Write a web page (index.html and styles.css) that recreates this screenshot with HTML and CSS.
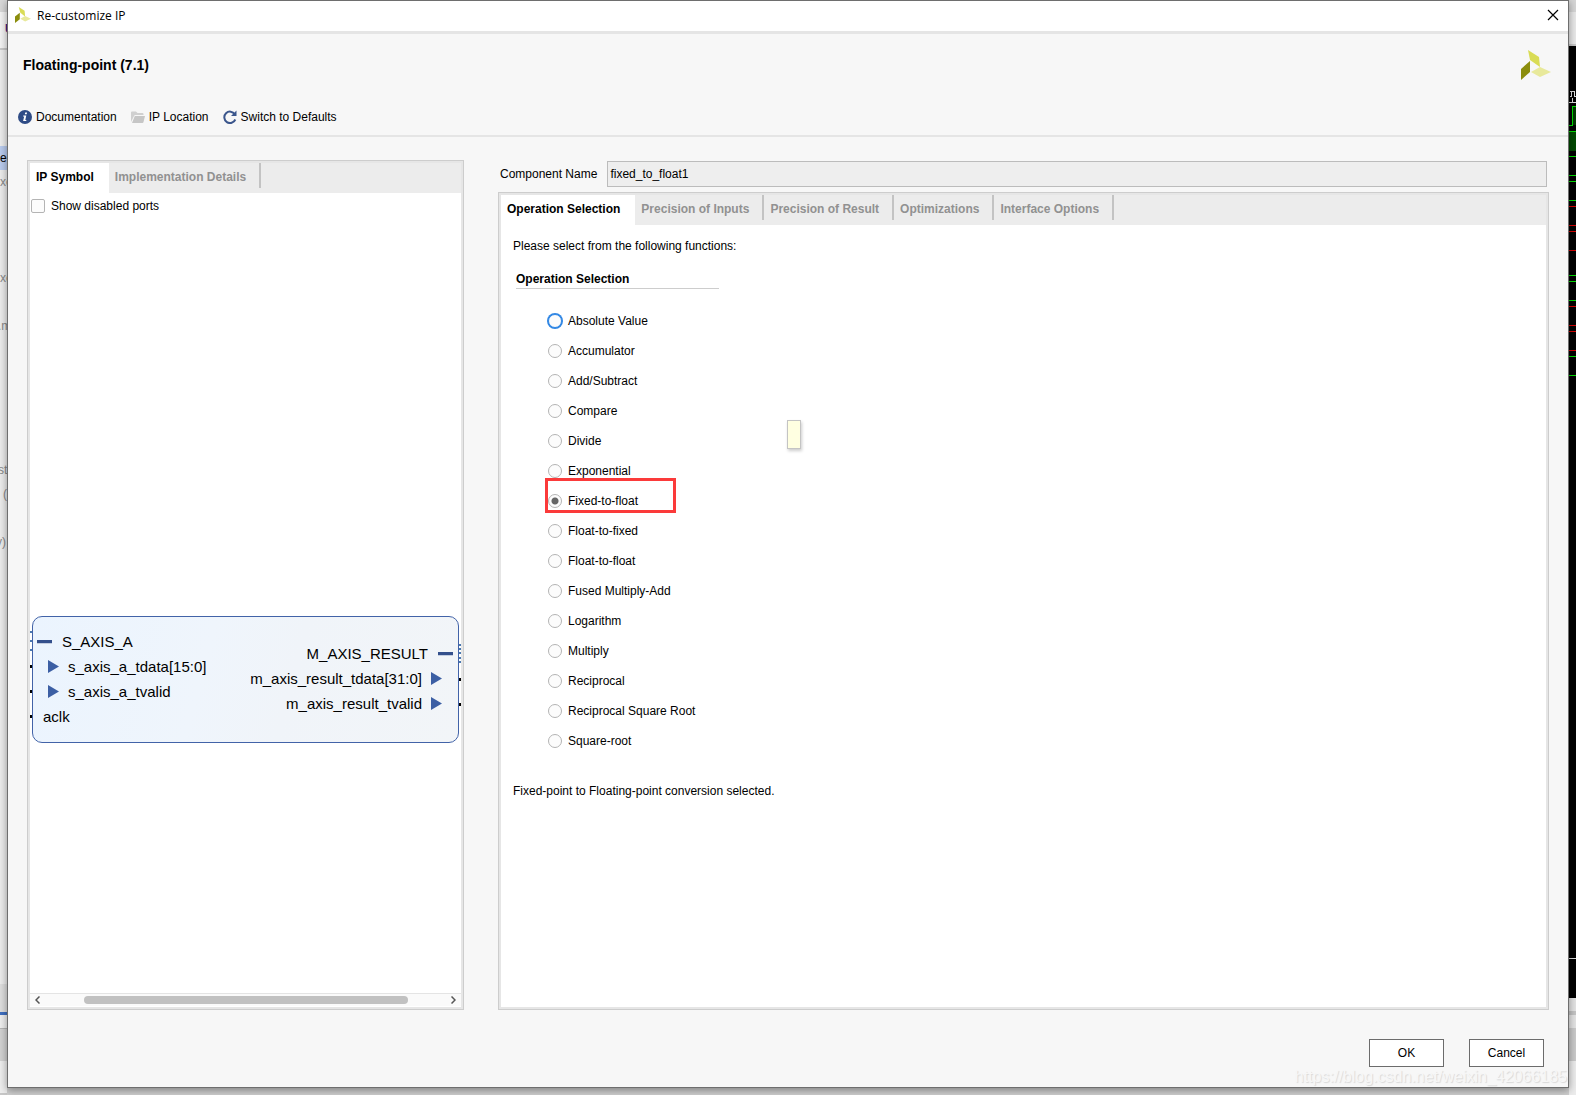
FILE: index.html
```html
<!DOCTYPE html>
<html lang="en">
<head>
<meta charset="utf-8">
<title>Re-customize IP</title>
<link rel="stylesheet" href="styles.css">
</head>
<body>
<div class="desktop">
  <div class="behind behind-left" aria-hidden="true">
    <span class="frag-purple">U</span>
    <span class="frag-selected">ec</span>
    <span class="frag f1">xe</span>
    <span class="frag f2">xe</span>
    <span class="frag f3">.m</span>
    <span class="frag f4">st</span>
    <span class="frag f5">(</span>
    <span class="frag f6">v)</span>
  </div>
  <svg class="behind behind-right" width="7" height="1095" viewBox="0 0 7 1095" aria-hidden="true" shape-rendering="crispEdges">
    <rect width="7" height="12" fill="#d6d6d6"/>
    <rect y="12" width="7" height="32" fill="#e9e9e9"/>
    <rect y="44" width="7" height="2" fill="#c8c8c8"/>
    <rect y="46" width="7" height="952" fill="#000"/>
    <path d="M1 91.500H6M2.500 91V97M5.500 91V97M1 96.500H3M5 96.500H7M0 102.500H7M3.500 98V102" stroke="#ddd" fill="none"/>
    <path d="M0 125.500H3.500V106.500H7M0 131.500H7" stroke="#00e000" fill="none"/>
    <rect x="4" y="107" width="3" height="18" fill="#003a00"/>
    <rect y="132" width="7" height="19" fill="#004800"/>
    <path d="M0 156.500H7M0 175.500H7M0 181.500H7M0 200.500H7M0 275.500H7M0 281.500H7M0 300.500H7M0 356.500H7M0 375.500H7" stroke="#00e000"/>
    <path d="M0 206.500H7M0 225.500H7M0 231.500H7M0 250.500H7M0 306.500H7M0 325.500H7M0 331.500H7M0 350.500H7" stroke="#d80000"/>
    <path d="M0 958.500H7" stroke="#ddd"/>
    <rect y="998" width="7" height="13" fill="#e4e4e4"/>
    <rect y="1011" width="7" height="4" fill="#c4c4c4"/>
    <rect y="1015" width="7" height="13" fill="#e4e4e4"/>
    <rect y="1028" width="7" height="33" fill="#cacaca"/>
    <rect y="1061" width="7" height="34" fill="#ececec"/>
  </svg>

  <main class="dialog">
    <header class="titlebar">
      <svg class="app-icon" width="16" height="16" viewBox="0 0 30 30" aria-hidden="true">
        <path d="M7 0l11 7 1 11-9-7z" fill="#d9dc55"/><path d="M0 18l9-7v12l-9 7z" fill="#8b8d0c"/><path d="M19 17l11 5-11 5-9-5z" fill="#e8e99b"/>
      </svg>
      <span class="title">Re-customize IP</span>
      <button class="close" type="button" aria-label="Close">
        <svg width="12" height="12" viewBox="0 0 12 12"><path d="M1 1l10 10M11 1L1 11" stroke="#000" stroke-width="1.200"/></svg>
      </button>
    </header>

    <section class="banner">
      <div class="banner-top">
        <h1>Floating-point (7.1)</h1>
        <svg width="30" height="30" viewBox="0 0 30 30" aria-hidden="true">
          <path d="M7 0l11 7 1 10-10-7z" fill="#d9dc55"/><path d="M0 19l9-8v11l-9 8z" fill="#8b8d0c"/><path d="M19 17l11 5-11 5-9-5z" fill="#e8e99b"/>
        </svg>
      </div>
      <nav class="toolbar">
        <a href="#documentation">
          <svg width="14" height="14" viewBox="0 0 14 14" aria-hidden="true"><circle cx="7" cy="7" r="7" fill="#2f4c86"/><path d="M7.200 2.500h1.900l-.4 1.700H6.800zM5.300 5.400h3L7.300 9.900h1.100l-.2 1.100H5.100L6.200 6.500H5z" fill="#fff"/></svg>
          Documentation</a>
        <a href="#location">
          <svg width="14" height="14" viewBox="0 0 14 14" aria-hidden="true"><path d="M0 12V2.500Q0 1.500 1 1.500H5L6.500 3H11.500Q12.500 3 12.500 4V5H4.500Q3.500 5 3 6z" fill="#d0d0d0"/><path d="M3.800 6H14L12.500 12Q12.300 13 11.500 13H1z" fill="#c6c6c6"/></svg>
          IP Location</a>
        <a href="#defaults">
          <svg width="14" height="14" viewBox="0 0 14 14" aria-hidden="true"><path d="M11.800 4.200A5.700 5.700 0 1 0 12.300 9.500" fill="none" stroke="#3b568c" stroke-width="2"/><path d="M13.500 0.500V6H8z" fill="#3b568c"/></svg>
          Switch to Defaults</a>
      </nav>
    </section>

    <div class="content">
      <section class="panel symbol-panel">
        <div class="tabs" role="tablist">
          <button type="button" role="tab" aria-selected="true" class="tab active">IP Symbol</button>
          <button type="button" role="tab" aria-selected="false" class="tab">Implementation Details</button>
        </div>
        <label class="check"><input type="checkbox">Show disabled ports</label>
        <div class="symbol-view">
          <div class="symbol">
            <svg class="pins" width="2" height="127" viewBox="0 0 2 127" aria-hidden="true" shape-rendering="crispEdges"><path d="M0 16h2M0 25h2M0 34h2" stroke="#4a78b0" stroke-width="2"/><path d="M0 50.500h2M0 75h2M0 100.500h2" stroke="#000" stroke-width="3"/></svg>
            <div class="block">
              <ul class="ports">
                <li class="bus"><i class="minus"></i>S_AXIS_A</li>
                <li class="pin"><i class="arrow"></i>s_axis_a_tdata[15:0]</li>
                <li class="pin"><i class="arrow"></i>s_axis_a_tvalid</li>
                <li>aclk</li>
              </ul>
              <ul class="ports out">
                <li class="bus">M_AXIS_RESULT<i class="minus"></i></li>
                <li class="pin">m_axis_result_tdata[31:0]<i class="arrow"></i></li>
                <li class="pin">m_axis_result_tvalid<i class="arrow"></i></li>
              </ul>
            </div>
            <svg class="pins" width="2" height="127" viewBox="0 0 2 127" aria-hidden="true" shape-rendering="crispEdges"><path d="M0 29h2M0 33h2M0 37h2M0 42h2M0 46h2" stroke="#4a78b0" stroke-width="2"/><path d="M0 63.500h2M0 88h2" stroke="#000" stroke-width="3"/></svg>
          </div>
        </div>
        <div class="scrollbar">
          <svg width="5" height="8" viewBox="0 0 5 8"><path d="M4.500 0.500L1 4l3.500 3.500" fill="none" stroke="#555" stroke-width="1.500"/></svg>
          <div class="track"><div class="thumb"></div></div>
          <svg width="5" height="8" viewBox="0 0 5 8"><path d="M.5 .5L4 4 .5 7.500" fill="none" stroke="#555" stroke-width="1.500"/></svg>
        </div>
      </section>

      <section class="config">
        <div class="name-row">
          <label for="cname">Component Name</label>
          <input id="cname" type="text" value="fixed_to_float1" readonly>
        </div>
        <div class="panel config-panel">
          <div class="tabs" role="tablist">
            <button type="button" role="tab" aria-selected="true" class="tab active">Operation Selection</button>
            <button type="button" role="tab" aria-selected="false" class="tab">Precision of Inputs</button>
            <button type="button" role="tab" aria-selected="false" class="tab">Precision of Result</button>
            <button type="button" role="tab" aria-selected="false" class="tab">Optimizations</button>
            <button type="button" role="tab" aria-selected="false" class="tab">Interface Options</button>
          </div>
          <div class="tab-body">
            <p>Please select from the following functions:</p>
            <fieldset>
              <legend>Operation Selection</legend>
              <label class="focus"><input type="radio" name="op">Absolute Value</label>
              <label><input type="radio" name="op">Accumulator</label>
              <label><input type="radio" name="op">Add/Subtract</label>
              <label><input type="radio" name="op">Compare</label>
              <label><input type="radio" name="op">Divide</label>
              <label><input type="radio" name="op">Exponential</label>
              <label class="marked"><input type="radio" name="op" checked>Fixed-to-float</label>
              <label><input type="radio" name="op">Float-to-fixed</label>
              <label><input type="radio" name="op">Float-to-float</label>
              <label><input type="radio" name="op">Fused Multiply-Add</label>
              <label><input type="radio" name="op">Logarithm</label>
              <label><input type="radio" name="op">Multiply</label>
              <label><input type="radio" name="op">Reciprocal</label>
              <label><input type="radio" name="op">Reciprocal Square Root</label>
              <label><input type="radio" name="op">Square-root</label>
            </fieldset>
            <p>Fixed-point to Floating-point conversion selected.</p>
            <div class="tooltip" role="tooltip"></div>
          </div>
        </div>
      </section>
    </div>

    <footer class="actions">
      <button type="button">OK</button>
      <button type="button">Cancel</button>
    </footer>
    <span class="watermark">https://blog.csdn.net/weixin_42066185</span>
  </main>
</div>
</body>
</html>
```
FILE: styles.css
```css
*, *::after { box-sizing: border-box; }
body {
  margin: 0;
  font: 12px/16px "Liberation Sans", Arial, sans-serif;
  color: #000;
}
button, input { font: inherit; color: inherit; }
.desktop {
  position: relative;
  display: flex;
  min-height: 100vh;
  padding: 0 7px 7px;
  background: #cfcfcf;
  overflow: hidden;
}

/* windows showing behind the dialog */
.behind { position: absolute; top: 0; }
.behind-right { right: 0; }
.behind-left {
  left: 0;
  bottom: 0;
  width: 7px;
  overflow: hidden;
  background: linear-gradient(#d8d8d8 0 12px, #f3f3f3 12px 48px, #c8c8c8 48px 50px, #ececec 50px 984px, #dedede 984px 1012px, #3f6fc0 1012px 1015px, #eeeeee 1015px 1028px, #b5b5b5 1028px 1029px, #d2d2d2 1029px 1061px, #eeeeee 1061px 1093px, #c8c8c8 1093px);
}
.behind-left span { position: absolute; left: 0; white-space: nowrap; }
.frag { color: #888; }
.behind-left .frag-purple { left: 5px; top: 21px; color: #40208a; font-weight: bold; }
.behind-left .frag-selected { top: 146px; width: 7px; height: 24px; line-height: 24px; background: #b9cbee; }
.f1 { top: 174px; }
.f2 { top: 270px; }
.behind-left .f3 { top: 318px; left: -2px; }
.behind-left .f4 { top: 462px; left: -2px; }
.behind-left .f5 { top: 486px; left: 3px; }
.behind-left .f6 { top: 534px; left: -4px; }

.dialog {
  position: relative;
  flex: 1;
  display: flex;
  flex-direction: column;
  min-width: 0;
  background: #f7f7f7;
  border: 1px solid #6e6e6e;
  box-shadow: 0 2px 8px rgba(0, 0, 0, .4);
}
.titlebar {
  display: flex;
  align-items: center;
  height: 33px;
  padding: 0 9px 2px 7px;
  background: #fff;
  border-bottom: 3px solid #e5e5e5;
}
.title { flex: 1; padding: 2px 0 0 6px; font: 12px/16px "Open Sans", "Noto Sans", sans-serif; }
.close { display: flex; padding: 0; border: 0; background: none; }

.banner { height: 103px; border-bottom: 2px solid #e5e5e5; }
.banner-top { display: flex; justify-content: space-between; padding: 16px 17px 0 15px; }
h1 { margin: 0; font-size: 14px; line-height: 30px; }
.toolbar { display: flex; gap: 14px; padding: 29px 10px 0; }
.toolbar a { display: flex; align-items: center; gap: 4px; color: inherit; text-decoration: none; }

.content {
  flex: 1;
  display: flex;
  gap: 34px;
  padding: 23px 19px 0;
}
.panel {
  display: flex;
  flex-direction: column;
  background: #fff;
  border: 1px solid #cdcdcd;
  box-shadow: inset 0 0 0 2px #e6e6e6;
  padding: 2px;
}
.symbol-panel { width: 437px; padding-bottom: 3px; }
.tabs { display: flex; height: 30px; background: #ececec; }
.tab {
  height: 25px;
  padding: 4px 13px 0 6px;
  border: 0;
  border-right: 2px solid #c3c3c3;
  background: none;
  color: #919191;
  font-weight: bold;
  line-height: 21px;
}
.tab.active { height: 30px; padding: 4px 15px 5px 6px; border: 0; background: #fff; color: #000; }

.check { display: flex; align-items: center; gap: 6px; padding: 5px 1px; }
.check input {
  appearance: none;
  width: 14px;
  height: 14px;
  margin: 0;
  border: 1px solid #b4b4b4;
  border-radius: 2px;
  background: #fcfcfc;
}
.symbol-view { flex: 1; display: flex; flex-direction: column; padding-top: 397px; }
.symbol { display: flex; }
.block {
  flex: 1;
  display: flex;
  justify-content: space-between;
  height: 127px;
  padding: 12px 16px 0 4px;
  border: 1px solid #4263a8;
  border-radius: 10px;
  background: linear-gradient(105deg, #ebf4fe 0, #eff5fc 40%, #f0f4f9 60%, #f2f5f8 100%);
}
.ports { margin: 0; padding: 0; list-style: none; font-size: 15px; line-height: 25px; }
.ports li { display: flex; align-items: center; padding-left: 6px; }
.ports .bus { gap: 10px; padding-left: 0; }
.ports .pin { gap: 9px; padding-left: 11px; }
.ports.out { padding-top: 12px; }
.ports.out li { justify-content: flex-end; padding-left: 0; }
.ports.out .bus { margin-right: -11px; }
.minus { width: 15px; height: 3px; background: #34508c; box-shadow: 0 1px #c3cde0; }
.arrow { width: 11px; height: 13px; background: #3c5fa4; clip-path: polygon(0 0, 100% 50%, 0 100%); }

.scrollbar { display: flex; align-items: center; height: 13px; padding: 0 5px; background: #fafafa; border-top: 1px solid #e4e4e4; }
.track { flex: 1; padding: 0 43px 0 44px; }
.thumb { height: 8px; border-radius: 4px; background: #c1c1c1; }

.config { flex: 1; display: flex; flex-direction: column; min-width: 0; }
.name-row { display: flex; align-items: center; gap: 10px; padding: 1px 2px 5px; }
.name-row input {
  flex: 1;
  min-width: 0;
  height: 26px;
  padding: 0 2px;
  border: 1px solid #bcbcbc;
  border-radius: 0;
  background: #eeeeee;
}
.config-panel { flex: 1; }
.tab-body { position: relative; padding: 13px 12px; }
p { margin: 0; }
fieldset { margin: 17px 0 0; padding: 0 3px; border: 0; min-width: 0; }
legend { width: 203px; margin: 0 0 17px; padding: 0 0 1px; border-bottom: 1px solid #cdcdcd; font-weight: bold; }
fieldset label { position: relative; display: flex; align-items: center; gap: 6px; width: 220px; height: 30px; padding-left: 32px; }
fieldset + p { padding-top: 27px; }
fieldset input {
  appearance: none;
  width: 14px;
  height: 14px;
  margin: 0;
  border: 1px solid #b4b4b4;
  border-radius: 50%;
  background: #fcfcfc;
}
fieldset input:checked { background: radial-gradient(circle, #666 0 3px, #fcfcfc 4px); }
.focus input { border-color: #2f86e4; box-shadow: 0 0 0 1px #2f86e4; }
.marked::after {
  content: "";
  position: absolute;
  left: 29px;
  top: -8px;
  width: 131px;
  height: 35px;
  border: 3px solid #fb3a3a;
}
.tooltip {
  position: absolute;
  left: 286px;
  top: 195px;
  width: 14px;
  height: 29px;
  border: 1px solid #c4c4c4;
  background: #ffffe1;
  box-shadow: 1px 2px 3px rgba(0, 0, 0, .2);
}
.actions { display: flex; justify-content: flex-end; gap: 25px; padding: 29px 24px 20px; }
.actions button { width: 75px; height: 28px; padding: 0; border: 1px solid #6c6c6c; background: #fff; }
.watermark {
  position: absolute;
  right: 1px;
  bottom: 1px;
  font-size: 16px;
  line-height: 18px;
  color: #f7f7f7;
  text-shadow: 1px 1px 1px #d8d8d8;
}
```
